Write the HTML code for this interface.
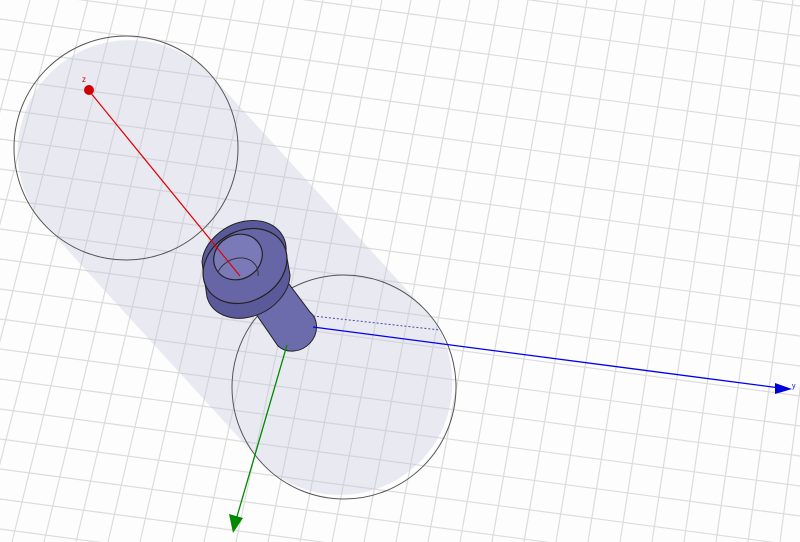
<!DOCTYPE html>
<html><head><style>html,body{margin:0;padding:0;background:#fdfdfd;overflow:hidden;width:800px;height:542px}svg{display:block}</style></head>
<body>
<svg width="800" height="542" viewBox="0 0 800 542" xmlns="http://www.w3.org/2000/svg">
<rect width="800" height="542" fill="#fdfdfd"/>
<g stroke="#dcdcdc" stroke-width="1.2">
<line x1="0" y1="-11" x2="800" y2="96"/>
<line x1="0" y1="19" x2="800" y2="126"/>
<line x1="0" y1="49" x2="800" y2="156"/>
<line x1="0" y1="79" x2="800" y2="186"/>
<line x1="0" y1="109" x2="800" y2="216"/>
<line x1="0" y1="139" x2="800" y2="246"/>
<line x1="0" y1="169" x2="800" y2="276"/>
<line x1="0" y1="199" x2="800" y2="306"/>
<line x1="0" y1="229" x2="800" y2="336"/>
<line x1="0" y1="259" x2="800" y2="366"/>
<line x1="0" y1="289" x2="800" y2="396"/>
<line x1="0" y1="319" x2="800" y2="426"/>
<line x1="0" y1="349" x2="800" y2="456"/>
<line x1="0" y1="379" x2="800" y2="486"/>
<line x1="0" y1="409" x2="800" y2="516"/>
<line x1="0" y1="439" x2="800" y2="546"/>
<line x1="0" y1="469" x2="800" y2="576"/>
<line x1="0" y1="499" x2="800" y2="606"/>
<line x1="0" y1="529" x2="800" y2="636"/>
<line x1="0" y1="-41" x2="800" y2="66"/>
<line x1="0" y1="-71" x2="800" y2="36"/>
<line x1="0" y1="-101" x2="800" y2="6"/>
<line x1="30" y1="0" x2="-116" y2="542"/>
<line x1="59" y1="0" x2="-84" y2="542"/>
<line x1="88" y1="0" x2="-52" y2="542"/>
<line x1="118" y1="0" x2="-20" y2="542"/>
<line x1="147" y1="0" x2="12" y2="542"/>
<line x1="176" y1="0" x2="44" y2="542"/>
<line x1="206" y1="0" x2="76" y2="542"/>
<line x1="235" y1="0" x2="108" y2="542"/>
<line x1="264" y1="0" x2="140" y2="542"/>
<line x1="294" y1="0" x2="172" y2="542"/>
<line x1="323" y1="0" x2="204" y2="542"/>
<line x1="352" y1="0" x2="236" y2="542"/>
<line x1="382" y1="0" x2="268" y2="542"/>
<line x1="411" y1="0" x2="300" y2="542"/>
<line x1="440" y1="0" x2="332" y2="542"/>
<line x1="470" y1="0" x2="364" y2="542"/>
<line x1="499" y1="0" x2="396" y2="542"/>
<line x1="528" y1="0" x2="428" y2="542"/>
<line x1="558" y1="0" x2="460" y2="542"/>
<line x1="587" y1="0" x2="492" y2="542"/>
<line x1="617" y1="0" x2="524" y2="542"/>
<line x1="646" y1="0" x2="556" y2="542"/>
<line x1="675" y1="0" x2="588" y2="542"/>
<line x1="705" y1="0" x2="620" y2="542"/>
<line x1="734" y1="0" x2="652" y2="542"/>
<line x1="763" y1="0" x2="684" y2="542"/>
<line x1="793" y1="0" x2="716" y2="542"/>
<line x1="822" y1="0" x2="748" y2="542"/>
<line x1="851" y1="0" x2="780" y2="542"/>
<line x1="881" y1="0" x2="812" y2="542"/>
</g>
<path d="M209,73 L427,312 A112,112 0 0 1 261,462 L43,223 A112,112 0 0 1 209,73 Z" fill="#c0c0dc" fill-opacity="0.32"/>
<circle cx="126" cy="148" r="112" fill="none" stroke="#555" stroke-width="1"/>
<circle cx="344" cy="387" r="112" fill="none" stroke="#555" stroke-width="1"/>
<line x1="313" y1="316" x2="440" y2="330" stroke="#4a4a9a" stroke-width="1" stroke-dasharray="2,2"/>
<!-- shank -->
<path d="M236,285 L268,256 L310,312 A22,20 -40 0 1 278,346 Z" fill="#6c6cac" stroke="#222" stroke-width="1"/>
<!-- head -->
<path d="M202,262 A44,34 -28 0 1 286,252 L290,275 A44,34 -28 0 1 207,297 Z" fill="#5a5a9a" stroke="#222" stroke-width="1"/>
<ellipse cx="245" cy="266" rx="44" ry="35" transform="rotate(-30 245 266)" fill="#6666a6" stroke="#222" stroke-width="1.2"/>
<ellipse cx="238" cy="257" rx="25" ry="22" transform="rotate(-30 238 257)" fill="#7a7ab8" stroke="#222" stroke-width="1.2"/>
<path d="M218,272 A22,18 -30 0 1 258,276" fill="none" stroke="#333" stroke-width="1"/>
<line x1="240" y1="276" x2="90" y2="92" stroke="#e00000" stroke-width="1.2"/>
<circle cx="89" cy="90" r="5" fill="#d00000"/>
<text x="82" y="82" font-family="Liberation Sans, sans-serif" font-size="8" fill="#d00000">z</text>
<line x1="313" y1="327" x2="780" y2="388" stroke="#0000ee" stroke-width="1.3"/>
<path d="M775,383 L792,389 L775,394 Z" fill="#0000dd"/>
<text x="792" y="388" font-family="Liberation Sans, sans-serif" font-size="7" fill="#0000dd">y</text>
<line x1="287" y1="345" x2="236" y2="520" stroke="#008800" stroke-width="1.3"/>
<path d="M229,514 L243,518 L233,533 Z" fill="#008800"/>
</svg>
</body></html>
